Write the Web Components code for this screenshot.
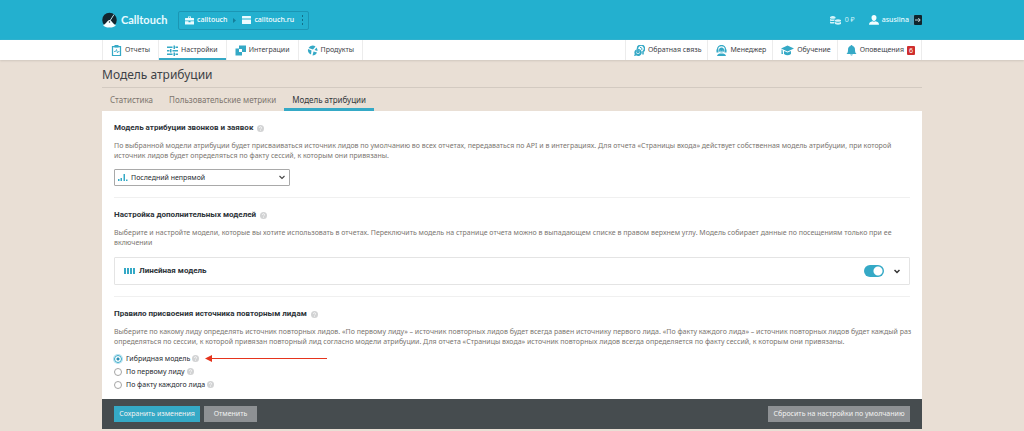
<!DOCTYPE html>
<html lang="ru">
<head>
<meta charset="utf-8">
<title>Модель атрибуции</title>
<style>
html{background:#e9dfd5}
body{margin:0;font:7px/10px "Noto Sans",sans-serif;color:#3d4247;background:#e9dfd5}
</style>
</head>
<body>
<ct-header></ct-header>
<ct-nav></ct-nav>
<ct-page heading="Модель атрибуции">
  <ct-tabs slot="tabs"></ct-tabs>
  <ct-section heading="Модель атрибуции звонков и заявок">
    <span slot="text">По выбранной модели атрибуции будет присваиваться источник лидов по умолчанию во всех отчетах, передаваться по API и в интеграциях. Для отчета «Страницы входа» действует собственная модель атрибуции, при которой<br>источник лидов будет определяться по факту сессий, к которым они привязаны.</span>
    <ct-select></ct-select>
  </ct-section>
  <ct-section heading="Настройка дополнительных моделей">
    <span slot="text">Выберите и настройте модели, которые вы хотите использовать в отчетах. Переключить модель на странице отчета можно в выпадающем списке в правом верхнем углу. Модель собирает данные по посещениям только при ее<br>включении</span>
    <ct-model>Линейная модель</ct-model>
  </ct-section>
  <ct-section heading="Правило присвоения источника повторным лидам">
    <span slot="text">Выберите по какому лиду определять источник повторных лидов. «По первому лиду» – источник повторных лидов будет всегда равен источнику первого лида. «По факту каждого лида» – источник повторных лидов будет каждый раз<br>определяться по сессии, к которой привязан повторный лид согласно модели атрибуции. Для отчета «Страницы входа» источник повторных лидов всегда определяется по факту сессий, к которым они привязаны.</span>
    <ct-rules></ct-rules>
  </ct-section>
  <ct-actions slot="footer"></ct-actions>
</ct-page>
<script>
const base = '*,:host{box-sizing:border-box}svg{display:block;flex:none}button{font:inherit;margin:0;cursor:pointer}a{color:inherit;text-decoration:none}';
const wrap = 'width:80%;min-width:820px;margin:0 auto;';
function define(name, render) {
  customElements.define(name, class extends HTMLElement {
    connectedCallback() {
      if (this.shadowRoot) return;
      const t = document.createElement('template');
      t.innerHTML = render(this);
      this.attachShadow({ mode: 'open' }).append(t.content.cloneNode(true));
    }
  });
}

define('ct-help', () => `<style>${base}
:host{display:inline-block}
button{display:block;width:7px;height:7px;padding:0;border:0;background:none}
</style><button type="button" aria-label="Справка"><svg width="7" height="7" viewBox="0 0 14 14"><circle cx="7" cy="7" r="7" fill="#d2d3d4"/><path d="M4.9 5.6a2.1 2.1 0 1 1 3 1.9c-.7.3-.9.6-.9 1.300M7 10v1.300" fill="none" stroke="#fff" stroke-width="1.500"/></svg></button>`);

define('ct-header', () => `<style>${base}
:host{display:block;background:#23b0cf;color:#fff}
.in{${wrap}height:40px;display:flex;align-items:center}
.logo{display:flex;align-items:center;gap:4px;width:76px;font:700 11px/16px Lato,sans-serif;color:#e8fbff}
.crumbs{display:flex;align-items:center;height:19px;width:131px;padding:0 4px 0 6px;border:1px solid #1b96b4;border-radius:2px;font-weight:500}
.crumbs a{display:flex;align-items:center;gap:3px}
.sep{margin:0 6px 0 5px}
.dots{padding:0;border:0;background:none;margin-left:auto}
.money{display:flex;align-items:center;gap:4px;margin-left:auto;color:#d5f3f9}
.user{display:flex;align-items:center;gap:3px;margin-left:14px;font-weight:500;color:#e8fbff}
.exit{display:flex;justify-content:flex-end;width:12px;padding:0;border:0;background:#49a5c2;margin-left:1px}
</style>
<div class="in">
<a class="logo" href="#"><svg width="15" height="16" viewBox="0 0 30 32"><circle cx="15" cy="16" r="14.500" fill="#12262f"/><path d="M24 5L15 19" stroke="#bfe6ee" stroke-width="2"/><path d="M2 26C7 26 10 17 15 16 20 17 23 26 28 26 25 30 21 31 15 31S5 30 2 26z" fill="#f6feff"/><circle cx="15" cy="20" r="1.500" fill="#12262f"/></svg><span>Calltouch</span></a>
<nav class="crumbs">
<a href="#"><svg width="9" height="9" viewBox="0 0 18 18" fill="#eafbff"><path d="M6 4V1h6v3h5a1 1 0 0 1 1 1v4H0V5a1 1 0 0 1 1-1zm1.500 0h3V2.500h-3zM0 10.500h7v2h4v-2h7V17H0z"/></svg>calltouch</a>
<svg class="sep" width="4" height="5" viewBox="0 0 4 5"><path d="M1 0l3 2.500L1 5z" fill="#147f9a"/></svg>
<a href="#"><svg width="9" height="8" viewBox="0 0 18 16" fill="#eafbff"><path d="M1 0h16a1 1 0 0 1 1 1v4H0V1a1 1 0 0 1 1-1zM0 7h18v8a1 1 0 0 1-1 1H1a1 1 0 0 1-1-1z"/></svg>calltouch.ru</a>
<button class="dots" type="button" aria-label="Меню"><svg width="3" height="10" viewBox="0 0 3 10" fill="#126f88"><path d="M1 0h1v2H1zM1 4h1v2H1zM1 8h1v2H1z"/></svg></button>
</nav>
<span class="money"><svg width="11" height="9" viewBox="0 0 22 18" fill="#d5f3f9"><path d="M0 2q5.500-4 11 0v2.500q-5.500 2-11 0zM0 6q5 2 9 .5v3q-4.500 1-9 0zM0 11q4 2 9 .5v3q-4.500 1-9 0zM10 8q6-3.500 12 0v2.300q-6 2-12 0zM10 12q6 2.500 12 0v4q-6 3-12 0z"/></svg>0 ₽</span>
<span class="user"><svg width="10" height="10" viewBox="0 0 20 20" fill="#f2fdff"><path d="M10 0c3 0 5 2 5 5.500S12.500 12 10 12 5 9 5 5.500 7 0 10 0zM0 19.500c0-4.500 3-6 7-7 1.500 1.300 4.500 1.300 6 0 4 1 7 2.500 7 7z"/></svg>asuslina</span>
<button class="exit" type="button" aria-label="Выход"><svg width="8" height="10" viewBox="0 0 16 20"><rect width="16" height="20" rx="2" fill="#10242c"/><path d="M2 10h10M8.500 6l4 4-4 4" fill="none" stroke="#d5e6ea" stroke-width="1.800"/></svg></button>
</div>`);

const navIcons = {
  report: '<path d="M3 3h16v18H3z" fill="none" stroke="#35a9c6" stroke-width="2.500"/><path d="M7 0h8v5H7z"/><path d="M6 13h3l2-4 2 7 1.500-3H17" fill="none" stroke="#35a9c6" stroke-width="1.600"/>',
  sliders: '<path d="M0 3h11v3H0zM17 3h5v3h-5zM13 1h3v7h-3zM0 10h5v3H0zM11 10h11v3H11zM6 8h3v7H6zM0 17h11v3H0zM17 17h5v3h-5zM13 15h3v7h-3z"/>',
  blocks: '<path d="M8 1h14v13H8z"/><path d="M1 7h13v14H1z"/><path d="M8 8h6v6H8z" fill="#fff"/>',
  products: '<path d="M11 1a10 10 0 0 1 6 2l-5 6-9-3a10 10 0 0 1 8-5zM2 8l7 3-1 8A10 10 0 0 1 2 8zM19 5a10 10 0 0 1 2 7l-6-2zM20 15a10 10 0 0 1-9 6l2-8z"/>',
  feedback: '<path d="M7 8a7 7 0 1 1 11 5v6" fill="none" stroke="#35a9c6" stroke-width="3"/><path d="M12 5a3 3 0 0 1 3 5" fill="none" stroke="#35a9c6" stroke-width="2"/><path d="M8 8a7 7 0 1 1-3 13l-5 1 1.500-4A7 7 0 0 1 8 8z"/><path d="M4 15q4 5 8 0M5 12h1.500M9.500 12H11" fill="none" stroke="#fff" stroke-width="1.500"/>',
  manager: '<path d="M3 13V9a8 8 0 0 1 16 0v4" fill="none" stroke="#35a9c6" stroke-width="2.500"/><path d="M1 9h4v6H1zM17 9h4v6h-4z"/><circle cx="11" cy="10" r="5"/><path d="M2 22c1-4 4-5 9-5s8 1 9 5z"/><path d="M8 12q3 3 6 0" fill="none" stroke="#fff" stroke-width="1.200"/>',
  study: '<path d="M13 1l13 6-13 6L0 7zM6 12l7 3 7-3v6q-7 5-14 0zM1 9v9h3l-1-8z"/>',
  bell: '<path d="M11 0a2 2 0 0 1 2 2c4 1 5 4 5 8s1 6 3 8H1c2-2 3-4 3-8s1-7 5-8a2 2 0 0 1 2-2zM8 19h6q-3 4-6 0z"/>'
};
define('ct-nav-item', el => `<style>${base}
:host{display:block}
a{display:flex;align-items:center;gap:3px;height:100%;padding:0 var(--nav-end,8px) 0 8px;border-left:1px solid #ececec}
:host([active]) a{box-shadow:inset 0 -2px #35a9c6}
</style><a href="#"><svg width="${el.hasAttribute('wide') ? 13 : 11}" height="11" viewBox="0 0 ${el.hasAttribute('wide') ? 26 : 22} 22" fill="#35a9c6">${navIcons[el.getAttribute('icon')]}</svg><span>${el.getAttribute('label')}</span><slot></slot></a>`);

define('ct-nav', () => `<style>${base}
:host{display:block;background:#fff;box-shadow:0 1px 2px #cfc6bd;position:relative}
nav{${wrap}height:20px;display:flex;border-right:1px solid #ececec}
.end{width:1px;background:#ececec;margin-right:auto}
.end ~ ct-nav-item{--nav-end:6px}
b{background:#cf2e2e;color:#fff;font-weight:400;width:8px;height:9px;line-height:9px;text-align:center;border-radius:1px}
</style><nav>
<ct-nav-item icon="report" label="Отчеты"></ct-nav-item>
<ct-nav-item icon="sliders" label="Настройки" active></ct-nav-item>
<ct-nav-item icon="blocks" label="Интеграции"></ct-nav-item>
<ct-nav-item icon="products" label="Продукты"></ct-nav-item>
<span class="end"></span>
<ct-nav-item icon="feedback" label="Обратная связь"></ct-nav-item>
<ct-nav-item icon="manager" label="Менеджер"></ct-nav-item>
<ct-nav-item icon="study" label="Обучение" wide></ct-nav-item>
<ct-nav-item icon="bell" label="Оповещения"><b>6</b></ct-nav-item>
</nav>`);

define('ct-page', el => `<style>${base}
:host{display:block;${wrap}}
h1{margin:0;font-weight:400;font-size:12px;line-height:16px;padding:7px 0 4px;border-bottom:1px solid #d3cac1}
main{background:#fff;padding:0 12px}
</style><h1>${el.getAttribute('heading')}</h1><slot name="tabs"></slot><main><slot></slot></main><slot name="footer"></slot>`);

define('ct-tabs', () => `<style>${base}
:host{display:block}
nav{display:flex;height:23px;font-size:8px;line-height:24px;color:#7d756e}
a{padding:0 8px}
.on{color:#33383c;box-shadow:inset 0 -3px #35a9c6}
</style><nav><a href="#">Статистика</a><a href="#">Пользовательские метрики</a><a class="on" href="#" aria-current="page">Модель атрибуции</a></nav>`);

define('ct-section', el => `<style>${base}
:host{display:block;padding:11px 0;border-bottom:1px solid #f0f0f0}
:host(:last-of-type){border:0;padding-bottom:8px}
h2{display:flex;align-items:center;gap:4px;margin:0 0 7px;font:700 8px/12px Roboto,sans-serif;color:#2d3338}
p{margin:0;color:#7a7570;white-space:nowrap}
</style><h2>${el.getAttribute('heading')}<ct-help></ct-help></h2><p><slot name="text"></slot></p><slot></slot>`);

define('ct-select', () => `<style>${base}
:host{display:block;position:relative;width:176px;margin-top:8px}
select{display:block;appearance:none;width:100%;height:17px;padding:0 16px;border:1px solid #a9a9a9;border-radius:1px;background:#fff;font:inherit;color:#262b30}
svg{position:absolute;pointer-events:none}
.bars{left:4px;top:5px}
.arrow{right:5px;top:6px}
</style><select aria-label="Модель атрибуции"><option>Последний непрямой</option></select>
<svg class="bars" width="10" height="7" viewBox="0 0 20 14" fill="#35a9c6"><path d="M0 10h3v4H0zM5 8h3v6H5zM11 0h3v14h-3zM16 11h3v3h-3z"/></svg>
<svg class="arrow" width="6" height="5" viewBox="0 0 6 5"><path d="M.5 1L3 3.500 5.500 1" fill="none" stroke="#444" stroke-width="1.100"/></svg>`);

define('ct-model', () => `<style>${base}
:host{display:flex;align-items:center;height:28px;margin-top:9px;padding:0 9px;border:1px solid #e4e4e4;border-radius:1px;font:700 8px/12px Roboto,sans-serif;color:#2d3338}
label{display:flex;align-items:center;gap:4px;flex:1}
input{appearance:none;width:20px;height:12px;margin:0;border-radius:6px;background:radial-gradient(circle at 14px 6px,#fff 4px,#35a9c6 5px)}
button{padding:0;border:0;background:none;margin-left:10px}
</style><label for="on"><svg width="11" height="6" viewBox="0 0 11 6" fill="#35a9c6"><path d="M0 0h2v6H0zM3 0h2v6H3zM6 0h2v6H6zM9 0h2v6H9z"/></svg><span><slot></slot></span></label>
<input id="on" type="checkbox" role="switch" checked>
<button type="button" aria-label="Развернуть"><svg width="6" height="5" viewBox="0 0 6 5"><path d="M.5 1L3 3.500 5.500 1" fill="none" stroke="#333" stroke-width="1.500"/></svg></button>`);

define('ct-rules', () => `<style>${base}
:host{display:block;margin-top:5px;color:#262b30}
div{display:flex;align-items:center;gap:2px;height:13px}
label{display:flex;align-items:center;gap:4px}
input{appearance:none;width:8px;height:8px;margin:0;border:1px solid #a5a5a5;border-radius:50%;background:#fff}
input:checked{border-color:#35a9c6;background:radial-gradient(circle,#2b8fb5 1px,#fff 2px);box-shadow:0 0 0 1px #b5e0f0}
.arrow{margin-left:4px}
</style>
<div><label><input type="radio" name="rule" checked>Гибридная модель</label><ct-help></ct-help><svg class="arrow" width="122" height="7" viewBox="0 0 122 7"><path d="M5 3.500H122" stroke="#e5341d"/><path d="M0 3.500L7 0V7z" fill="#e5341d"/></svg></div>
<div><label><input type="radio" name="rule">По первому лиду</label><ct-help></ct-help></div>
<div><label><input type="radio" name="rule">По факту каждого лида</label><ct-help></ct-help></div>`);

define('ct-actions', () => `<style>${base}
:host{display:flex;align-items:center;gap:4px;height:30px;padding:0 12px;margin-bottom:2px;background:#464c4f}
button{height:16px;border:0;padding:0 3px;background:#8e9194;color:#f2f2f2;white-space:nowrap}
.save{background:#35a9c6;width:86px}
.cancel{width:53px}
.reset{margin-left:auto;width:142px}
</style><button class="save" type="submit">Сохранить изменения</button><button class="cancel" type="button">Отменить</button><button class="reset" type="button">Сбросить на настройки по умолчанию</button>`);
</script>
</body>
</html>
